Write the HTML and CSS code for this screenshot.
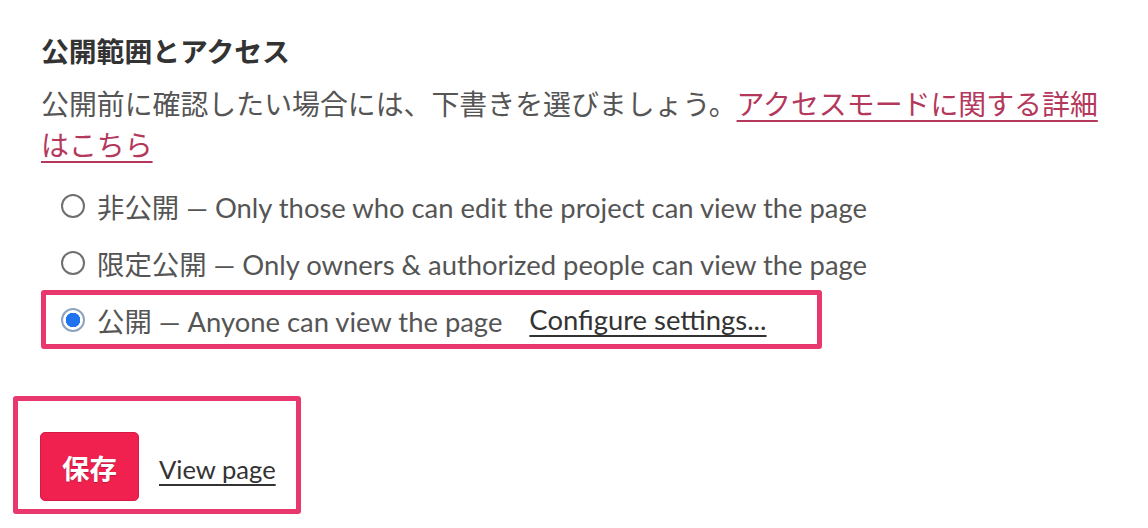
FILE: index.html
```html
<!DOCTYPE html>
<html lang="ja">
<head>
<meta charset="utf-8">
<title>公開範囲とアクセス</title>
<link rel="stylesheet" href="styles.css">
</head>
<body>
<div class="page">
  <h2 class="title">公開範囲とアクセス</h2>
  <p class="desc">公開前に確認したい場合には、下書きを選びましょう。<a class="link" href="#">アクセスモードに関する詳細はこちら</a></p>
  <div class="options">
    <label class="option"><input class="radio" type="radio" name="access"><span>非公開 — Only those who can edit the project can view the page</span></label>
    <label class="option"><input class="radio" type="radio" name="access"><span>限定公開 — Only owners &amp; authorized people can view the page</span></label>
    <div class="option option-marked"><label class="option-inner"><input class="radio" type="radio" name="access" checked><span>公開 — Anyone can view the page</span></label><a class="settings" href="#">Configure settings...</a></div>
  </div>
  <div class="actions">
    <button class="save" type="button">保存</button>
    <a class="view" href="#">View page</a>
  </div>
</div>
</body>
</html>
```
FILE: styles.css
```css
html, body {
  margin: 0;
  padding: 0;
  background: #ffffff;
}

.page {
  padding: 31px 41px 0;
  font-family: Lato, "Noto Sans CJK JP", sans-serif;
  color: #555555;
}

.title {
  margin: 0;
  font-size: 27.8px;
  line-height: 42px;
  font-weight: 700;
  color: #333333;
}

.desc {
  margin: 11px 0 0;
  font-size: 27.9px;
  line-height: 41px;
  color: #555555;
}

.link {
  color: #b4385c;
  text-decoration: underline;
  text-underline-offset: 5px;
  text-decoration-thickness: 2px;
}

.options {
  display: flex;
  flex-direction: column;
  align-items: flex-start;
  gap: 8px;
  margin-top: 15px;
  padding-left: 20px;
}

.option {
  display: flex;
  align-items: center;
  min-height: 49px;
  font-size: 27.4px;
  color: #555555;
}

.option-inner {
  display: flex;
  align-items: center;
}

.option-marked {
  border: 5px solid #e8386d;
  border-radius: 3px;
  margin: -5px 0 -5px -20px;
  padding: 0 50px 0 15px;
}

.radio {
  appearance: none;
  -webkit-appearance: none;
  margin: 0 12px 0 0;
  width: 24px;
  height: 24px;
  border: 2px solid #6f6f6f;
  border-radius: 50%;
  background: #ffffff;
  box-sizing: border-box;
  flex: none;
}

.radio:checked {
  border: 2px solid #8ea3bd;
  background: radial-gradient(circle, #1f74ee 0 7px, #ffffff 7.5px);
}

.settings {
  margin-left: 27px;
  color: #333333;
  text-decoration: underline;
  text-underline-offset: 5px;
  text-decoration-thickness: 2px;
}

.actions {
  display: inline-flex;
  align-items: center;
  margin: 52px 0 0 -28px;
  padding: 31px 20px 8px 22px;
  border: 5px solid #e8386d;
  border-radius: 3px;
}

.save {
  box-sizing: border-box;
  height: 69px;
  padding: 0 21px;
  border: 1px solid #d51b45;
  border-radius: 5px;
  background: #f0214f;
  color: #ffffff;
  font-family: "Noto Sans CJK JP", sans-serif;
  font-size: 27.5px;
  font-weight: 700;
  text-shadow: 0 1px 1px rgba(0, 0, 0, 0.25);
}

.view {
  margin-left: 20px;
  margin-top: 5px;
  font-size: 25.6px;
  color: #333333;
  text-decoration: underline;
  text-underline-offset: 5px;
  text-decoration-thickness: 2px;
}
```
